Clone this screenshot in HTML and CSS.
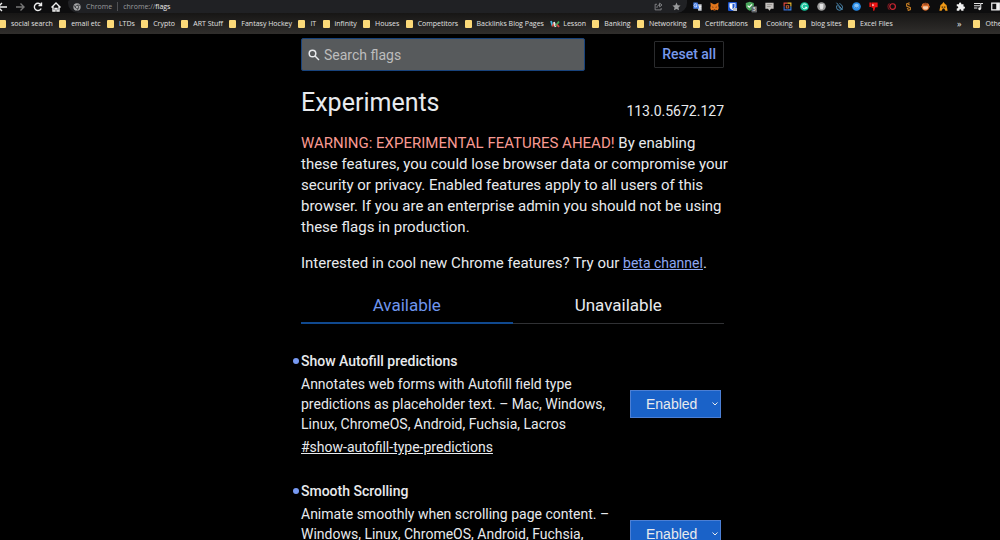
FILE: index.html
```html
<!DOCTYPE html>
<html lang="en">
<head>
<meta charset="utf-8">
<title>Experiments</title>
<link rel="stylesheet" href="styles.css">
</head>
<body>
<header class="browser">
  <div class="toolbar">
    <nav class="nav-buttons" aria-label="Navigation">
      <button class="tool light" aria-label="Back"><svg viewBox="0 0 12 12"><path d="M11 6H2M6 2L2 6l4 4"/></svg></button>
      <button class="tool dim" aria-label="Forward"><svg viewBox="0 0 12 12"><path d="M2 6h8M6.500 2.500L10 6l-3.500 3.500"/></svg></button>
      <button class="tool light" aria-label="Reload"><svg viewBox="0 0 12 12"><path d="M9.200 7.500A3.600 3.600 0 1 1 8.800 3.700M9.500 1.500v3H6.500"/></svg></button>
      <button class="tool light" aria-label="Home"><svg viewBox="0 0 12 12"><path d="M1.500 6.500L6 2l4.500 4.500M3 5.500V10h2V7.500h2V10h2V5.500"/></svg></button>
    </nav>
    <div class="omnibox">
      <svg class="site-icon" viewBox="0 0 12 12"><circle cx="6" cy="6" r="5.500" fill="#a5a6a8"/><circle cx="6" cy="6" r="2.700" fill="#202124"/><circle cx="6" cy="6" r="1.800" fill="#a5a6a8"/><path d="M6 3.300h5M3.700 7.300L1.200 3M8.300 7.300L6 11.500" stroke="#202124" fill="none"/></svg>
      <span class="site">Chrome</span>
      <span class="rule"></span>
      <span class="url">chrome://<b>flags</b></span>
      <button class="tool share" aria-label="Share"><svg viewBox="0 0 12 12"><path d="M4 3H1.500v7.500h8V8M3.800 8c.2-3 2-4.200 4.200-4.200M7.500 1.500L10.700 4 7.500 6.500z"/></svg></button>
      <button class="tool star" aria-label="Bookmark this tab"><svg viewBox="0 0 12 12"><path d="M6 .8l1.600 3.500 3.800.4-2.800 2.600.8 3.800L6 9.200 2.600 11.100l.8-3.800L.6 4.700l3.800-.4z" fill="#9a9b9d"/></svg></button>
    </div>
    <div class="extensions">
      <svg viewBox="0 0 12 12"><path d="M5 3h6.500v8.500H7z" fill="#c9cdd2"/><path d="M.5.500h5.500L8.500 9h-8z" fill="#4b83ea"/><path d="M5 3.500A2 2 0 1 0 5.300 5H3.700M8 6h3M9.500 5v1c0 1.500-.8 2.500-1.500 3M8.500 7l2 2" stroke="#fff" stroke-width=".8" fill="none"/></svg>
      <svg viewBox="0 0 12 12"><path d="M.5.800L5 3h2L11.500.8 11 5l.7 3-1.200 3-2.500-.8-1 1H5l-1-1-2.500.8L.3 8 1 5z" fill="#e2761b"/><path d="M2.500 6l2.300.5L4 8zM9.500 6l-2.300.5L8 8zM5 9.500h2V11H5z" fill="#5c2b14"/></svg>
      <svg viewBox="0 0 12 12"><rect width="12" height="12" rx="1.500" fill="#1c55ce"/><path d="M2 1.500h8V6c0 2.500-2 4-4 5-2-1-4-2.500-4-5z" fill="#fff"/><path d="M6 2.800h2.800V6c0 1.600-1.300 2.700-2.800 3.500z" fill="#1c55ce"/><path d="M7 8h5v4H7z" fill="#b9bcc2"/></svg>
      <svg class="counted" viewBox="0 0 15 14"><path d="M6 .5l5 1.500v3.500c0 3-2 5-5 6.300C3 10.500 1 8.500 1 5.500V2z" fill="#4aa65c"/><path d="M3.300 5.200l2 2 3.500-3.500" stroke="#fff" stroke-width="1.400" fill="none"/><rect x="8" y="6" width="7" height="8" rx="1" fill="#606468"/><text x="11.500" y="12.500" class="count">3</text></svg>
      <svg viewBox="0 0 12 12"><path d="M.5 1h11v8H8L6 11.500 4 9H.5z" fill="#c4c1be"/><path d="M2.500 3.500h7M2.500 6h5" stroke="#85817d"/></svg>
      <svg viewBox="0 0 12 12" fill="none" stroke-width="1.500"><path d="M1.500 6V1.500H6" stroke="#e64a3c"/><path d="M6 1.500h4.500V6" stroke="#e8b830"/><path d="M10.500 6v4.500H6" stroke="#397ee0"/><path d="M6 10.500H1.500V6" stroke="#3a6fd0"/><path d="M4.500 8V5h3v3z" stroke="#b65a37"/></svg>
      <svg viewBox="0 0 12 12"><circle cx="6" cy="6" r="5.800" fill="#15c39a"/><path d="M8.700 4A3.200 3.200 0 1 0 9 7H6.500M9 7v2" stroke="#fff" stroke-width="1.200" fill="none"/></svg>
      <svg viewBox="0 0 12 12"><circle cx="6" cy="6" r="5.700" fill="#9b9b9b"/><path d="M3.500 2.500h5v4l-1 3h-3l-1-3z" fill="#e4e4e4"/></svg>
      <svg viewBox="0 0 12 12" fill="none" stroke="#4f8fb8" stroke-width="1.300"><path d="M2 1l8 9.500M6 2c2.500 1.500 4 3 4 5a4 4 0 0 1-8 0c0-1.500.8-2.500 1.500-3M4.500 6l3 3.500"/></svg>
      <svg viewBox="0 0 12 12"><circle cx="6" cy="6" r="5.800" fill="#278be9"/><circle cx="6" cy="5.500" r="3.300" fill="#85c4fa"/><path d="M3.500 6c1 2.500 4 2.500 5 0" stroke="#1763b6" fill="none"/></svg>
      <svg viewBox="0 0 12 12"><path d="M.5.500H3v6H.5zM3.500.500H11.500v6.500H8.500L7 11.500H5.500V7.500h-2z" fill="#ee1515"/><path d="M4.500 2.500L7 4 4.500 5.500z" fill="#fff"/></svg>
      <svg viewBox="0 0 12 12" fill="none"><path d="M3.500 2C.5 3 .5 9 3.500 10" stroke="#7c1b23" stroke-width="1.500"/><circle cx="7.500" cy="6" r="3.700" stroke="#ce2632" stroke-width="1.600"/></svg>
      <svg viewBox="0 0 12 12"><path d="M7.500 1L3.500 2.500v3l5 2v2.500L5 11.500M7.500 4L5.500 3M4 8.500l2 1" fill="none" stroke="#c27a22" stroke-width="1.600"/></svg>
      <svg viewBox="0 0 12 12"><path d="M1 5C1 2 3.500 1 6 1s5 1 5 4l1 1-1.200 2C10 10.500 8 11.500 6 11.500S2 10.500 1.200 8L0 6z" fill="#d66a29"/><path d="M3 5.500h6l.5 2.500L8 10H4L2.500 8z" fill="#f7cfae"/><path d="M3.500 1.500h5v2h-5z" fill="#88401f"/></svg>
      <svg viewBox="0 0 12 12"><path d="M6 0l2 2.500L10 4l1.500 7.500H8.500L7 8.500H5l-1.500 3h-3L2 4l2-1.500z" fill="#f09a16"/><path d="M3.500 6h2v1.500h-2zM6.500 6h2v1.500h-2z" fill="#40290a"/></svg>
      <svg viewBox="0 0 12 12"><path d="M1 3h3V2a1.500 1.500 0 0 1 3 0v1h3v3h.5a1.500 1.500 0 0 1 0 3H10v2.500H7V11a1.300 1.300 0 0 0-2.600 0v.5H1v-3h.5a1.500 1.500 0 0 0 0-3H1z" fill="#f1f1f1"/></svg>
      <svg viewBox="0 0 12 12"><path d="M0 2h8M0 5h8M0 8h4.500M9 9V2h3" stroke="#e6e6e6" stroke-width="1.400" fill="none"/><circle cx="7.500" cy="9" r="1.900" fill="#e6e6e6"/></svg>
      <svg viewBox="0 0 12 12"><path d="M1 1.500h10v9H1z" fill="none" stroke="#f1f1f1" stroke-width="1.600"/><path d="M7 1.500h4v9H7z" fill="#f1f1f1"/></svg>
    </div>
  </div>
  <nav class="bookmarks" aria-label="Bookmarks">
    <div class="marks">
      <a href="#"><i class="folder"></i>social search</a>
      <a href="#"><i class="folder"></i>email etc</a>
      <a href="#"><i class="folder"></i>LTDs</a>
      <a href="#"><i class="folder"></i>Crypto</a>
      <a href="#"><i class="folder"></i>ART Stuff</a>
      <a href="#"><i class="folder"></i>Fantasy Hockey</a>
      <a href="#"><i class="folder"></i>IT</a>
      <a href="#"><i class="folder"></i>infinity</a>
      <a href="#"><i class="folder"></i>Houses</a>
      <a href="#"><i class="folder"></i>Competitors</a>
      <a href="#"><i class="folder"></i>Backlinks Blog Pages</a>
      <a href="#"><svg class="lesson" viewBox="0 0 10 8" fill="none" stroke-width="1.800"><path d="M1 1l1.500 5" stroke="#45b4dd"/><path d="M2.500 6.500L4 3" stroke="#e5483c"/><path d="M4 2l1.500 5" stroke="#e8e8e8"/><path d="M5.500 6L9 1.500" stroke="#45a65b"/><path d="M7 4.500l2 2.500" stroke="#d84646"/></svg>Lesson</a>
      <a href="#"><i class="folder"></i>Banking</a>
      <a href="#"><i class="folder"></i>Networking</a>
      <a href="#"><i class="folder"></i>Certifications</a>
      <a href="#"><i class="folder"></i>Cooking</a>
      <a href="#"><i class="folder"></i>blog sites</a>
      <a href="#"><i class="folder"></i>Excel Files</a>
    </div>
    <div class="overflow">
      <button class="more" aria-label="More bookmarks">»</button>
      <span class="rule"></span>
      <a href="#"><i class="folder"></i>Other bookmarks</a>
    </div>
  </nav>
</header>
<main class="page">
  <div class="search-row">
    <label class="search">
      <svg viewBox="0 0 12 12"><circle cx="4.500" cy="4.500" r="3.300"/><path d="M7 7l4 4"/></svg>
      <input type="text" placeholder="Search flags" aria-label="Search flags">
    </label>
    <button class="reset">Reset all</button>
  </div>
  <div class="title-row">
    <h1>Experiments</h1>
    <span class="version">113.0.5672.127</span>
  </div>
  <p class="blurb"><span class="warning">WARNING: EXPERIMENTAL FEATURES AHEAD!</span> By enabling these features, you could lose browser data or compromise your security or privacy. Enabled features apply to all users of this browser. If you are an enterprise admin you should not be using these flags in production.</p>
  <p class="promo">Interested in cool new Chrome features? Try our <a href="#">beta channel</a>.</p>
  <div class="tabs" role="tablist">
    <button class="tab selected" role="tab" aria-selected="true">Available</button>
    <button class="tab" role="tab" aria-selected="false">Unavailable</button>
  </div>
  <section class="flag">
    <div class="detail">
      <h2>Show Autofill predictions</h2>
      <p>Annotates web forms with Autofill field type predictions as placeholder text. – Mac, Windows, Linux, ChromeOS, Android, Fuchsia, Lacros</p>
      <a class="permalink" href="#show-autofill-type-predictions">#show-autofill-type-predictions</a>
    </div>
    <div class="choice">
      <select aria-label="Show Autofill predictions"><option>Enabled</option></select>
      <svg viewBox="0 0 6 4"><path d="M.5.500L3 3 5.500.5"/></svg>
    </div>
  </section>
  <section class="flag">
    <div class="detail">
      <h2>Smooth Scrolling</h2>
      <p>Animate smoothly when scrolling page content. – Windows, Linux, ChromeOS, Android, Fuchsia, Lacros</p>
      <a class="permalink" href="#smooth-scrolling">#smooth-scrolling</a>
    </div>
    <div class="choice">
      <select aria-label="Smooth Scrolling"><option>Enabled</option></select>
      <svg viewBox="0 0 6 4"><path d="M.5.500L3 3 5.500.5"/></svg>
    </div>
  </section>
</main>
</body>
</html>
```

FILE: styles.css
```css
* {
  box-sizing: border-box;
}

body {
  margin: 0;
  height: 100vh;
  overflow: hidden;
  background: #000;
  color: #e8eaed;
  font: 14px/21px Roboto, sans-serif;
}

button {
  padding: 0;
  border: 0;
  background: none;
  color: inherit;
  font: inherit;
}

.browser {
  overflow: hidden;
  font-family: "Open Sans", sans-serif;
}

.toolbar {
  display: flex;
  height: 13px;
  background: #0d0d0e;
}

.nav-buttons {
  display: flex;
  gap: 6px;
  width: 68px;
  margin-left: -4px;
  margin-right: 4px;
}

.tool {
  display: flex;
  align-items: center;
  flex: none;
}

.tool svg {
  width: 12px;
  height: 12px;
  fill: none;
  stroke: #eee;
  stroke-width: 1.4;
}

.dim svg {
  stroke: #777;
}

.omnibox {
  display: flex;
  align-items: center;
  flex: 1;
  gap: 5px;
  padding: 0 5px;
  border-radius: 2px 0 10px 10px;
  background: #202124;
  color: #9a9b9d;
  font: 7px/12px "Open Sans", sans-serif;
}

.omnibox b {
  color: #eee;
  font-weight: 400;
}

.site-icon {
  width: 8px;
  height: 8px;
}

.rule {
  width: 1px;
  height: 9px;
  background: #505154;
}

.share {
  margin-left: auto;
}

.share svg,
.star svg {
  width: 9px;
  height: 9px;
  stroke: #9a9b9d;
  stroke-width: 1;
}

.star {
  margin-left: 4px;
  margin-right: 1px;
}

.star svg {
  stroke: none;
}

.extensions {
  display: flex;
  align-items: center;
  justify-content: space-between;
  width: 313px;
  padding-left: 6px;
}

.extensions svg {
  width: 9px;
  height: 9px;
  flex: none;
}

.extensions .counted {
  width: 12px;
  height: 12px;
}

.count {
  fill: #fff;
  font-size: 7px;
  text-anchor: middle;
}

.bookmarks {
  display: flex;
  align-items: center;
  gap: 64px;
  height: 21px;
  background: linear-gradient(#171615, #302e2c);
  color: #e2e2e2;
  font-size: 7px;
  line-height: 12px;
}

.bookmarks a {
  display: flex;
  align-items: center;
  gap: 5px;
  color: inherit;
  text-decoration: none;
  white-space: nowrap;
}

.marks {
  display: flex;
  justify-content: space-between;
  flex: 1;
  margin-left: -1px;
}

.folder {
  flex: none;
  width: 7px;
  height: 8px;
  border-radius: 1px;
  background: #fbd978;
}

.lesson {
  width: 10px;
  height: 8px;
  margin-right: -2px;
}

.overflow {
  display: flex;
  align-items: center;
  gap: 6px;
  width: 43px;
}

.more {
  font-size: 9px;
}

.page {
  width: 448px;
  max-width: 100%;
  margin: 0 auto;
  padding: 4px 0 0 25px;
}

.search-row {
  display: flex;
  align-items: center;
  justify-content: space-between;
}

.search {
  display: flex;
  align-items: center;
  gap: 4px;
  width: 284px;
  height: 33px;
  padding: 0 6px;
  border: 1px solid #18437c;
  border-radius: 2px;
  background: #575a5c;
}

.search svg {
  width: 12px;
  height: 12px;
  fill: none;
  stroke: #e8eaed;
  stroke-width: 1.5;
}

.search input {
  flex: 1;
  min-width: 0;
  padding: 0;
  border: 0;
  outline: 0;
  background: none;
  color: #fff;
  font: 14px/20px Roboto, sans-serif;
}

.search input::placeholder {
  color: #bdbdbd;
}

.reset {
  height: 27px;
  padding: 0 7px;
  border: 1px solid #2a2b2d;
  border-radius: 1px;
  color: #7799ec;
  font-weight: 500;
}

.title-row {
  display: flex;
  align-items: flex-end;
  justify-content: space-between;
  margin-top: 16px;
}

h1 {
  margin: 0;
  font-size: 25px;
  font-weight: 400;
  line-height: 32px;
}

.version {
  line-height: 16px;
}

.blurb {
  margin: 14px -6px 15px 0;
  font-size: 15px;
}

.warning {
  color: #f89a92;
}

.promo {
  margin: 0;
  font-size: 15px;
}

.promo a {
  color: #8ea7f2;
  font-size: 14px;
}

.tabs {
  display: flex;
  margin-top: 13px;
}

.tab {
  flex: 1;
  padding: 7px 0;
  border-bottom: 1px solid #303134;
  font-size: 17px;
  line-height: 22px;
}

.tab.selected {
  padding-bottom: 6px;
  border-bottom: 2px solid #10498f;
  color: #6f96ee;
}

.flag {
  display: flex;
  align-items: center;
  justify-content: space-between;
  margin: 27px 0 24px;
  padding-right: 3px;
}

.flag + .flag {
  margin-top: 0;
}

.detail {
  width: 312px;
}

h2 {
  display: flex;
  align-items: center;
  margin: 0 0 3px -8px;
  font-size: 14px;
  font-weight: 500;
  line-height: 20px;
}

h2::before {
  content: "";
  width: 6px;
  height: 6px;
  margin-right: 2px;
  border-radius: 50%;
  background: #7799f2;
}

.detail p {
  margin: 0;
  line-height: 20px;
}

.permalink {
  display: block;
  margin-top: 3px;
  color: inherit;
  line-height: 20px;
}

.choice {
  display: grid;
  align-items: center;
  width: 91px;
}

.choice > * {
  grid-area: 1 / 1;
}

.choice select {
  height: 28px;
  padding: 0 15px;
  border: 1px solid #4c7fd4;
  border-radius: 0;
  appearance: none;
  background: #1a62c8;
  color: #e8eaed;
  font: 14px/20px "Liberation Sans", sans-serif;
}

.choice svg {
  justify-self: end;
  width: 6px;
  height: 4px;
  margin-right: 3px;
  fill: none;
  stroke: #e8eaed;
  pointer-events: none;
}
```
